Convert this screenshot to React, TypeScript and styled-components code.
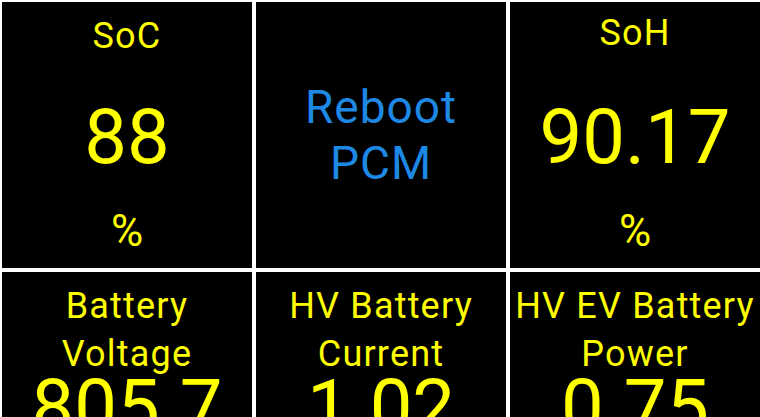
import React from 'react';
import styled, {createGlobalStyle} from 'styled-components';

const GlobalStyle = createGlobalStyle`
    html, body {
        margin: 0;
        padding: 0;
        background: #ffffff;
        overflow: hidden;
    }
    body {
        font-family: Roboto, "Noto Sans", sans-serif;
    }
`

const Board = styled.div`
    display: grid;
    grid-template-columns: repeat(3, 1fr);
    grid-auto-rows: 266px;
    gap: 4px;
    padding: 2px 0 0 2px;
    width: 760px;
    height: 417px;
    box-sizing: border-box;
    background: #ffffff;
    overflow: hidden;
`

const Cell = styled.div`
    display: grid;
    grid-template: 1fr / 1fr;
    background: #000000;
    padding: 10px 2px 11px;
    box-sizing: border-box;
    overflow: hidden;
    color: #ffff00;
    text-align: center;
`

const Title = styled.div<{$shift?: number}>`
    grid-area: 1 / 1;
    align-self: start;
    margin-top: ${p => p.$shift || 0}px;
    font-size: 36px;
    line-height: 48px;
    letter-spacing: 1.2px;
    white-space: nowrap;
`

const Value = styled.div`
    grid-area: 1 / 1;
    align-self: center;
    margin-top: 6px;
    font-size: 76px;
    line-height: 89px;
    white-space: nowrap;
`

const Unit = styled.div`
    grid-area: 1 / 1;
    align-self: end;
    font-size: 44px;
    line-height: 51px;
`

const Action = styled.div`
    grid-area: 1 / 1;
    align-self: center;
    font-size: 46px;
    line-height: 56px;
    letter-spacing: 1px;
    color: #1e88e5;
`

type Gauge = {title: string[]; value: string; unit?: string; shift?: number};

const GaugeCell = ({title, value, unit, shift}: Gauge) => (
    <Cell>
        <Title $shift={shift}>
            {title.map(line => <div key={line}>{line}</div>)}
        </Title>
        <Value>{value}</Value>
        {unit && <Unit>{unit}</Unit>}
    </Cell>
);

export default function App() {
    return (
        <>
            <GlobalStyle />
            <Board>
                <GaugeCell title={['SoC']} value="88" unit="%" />
                <Cell>
                    <Action>Reboot<br />PCM</Action>
                </Cell>
                <GaugeCell title={['SoH']} value="90.17" unit="%" shift={-3} />
                <GaugeCell title={['Battery', 'Voltage']} value="805.7" />
                <GaugeCell title={['HV Battery', 'Current']} value="1.02" />
                <GaugeCell title={['HV EV Battery', 'Power']} value="0.75" />
            </Board>
        </>
    );
}
